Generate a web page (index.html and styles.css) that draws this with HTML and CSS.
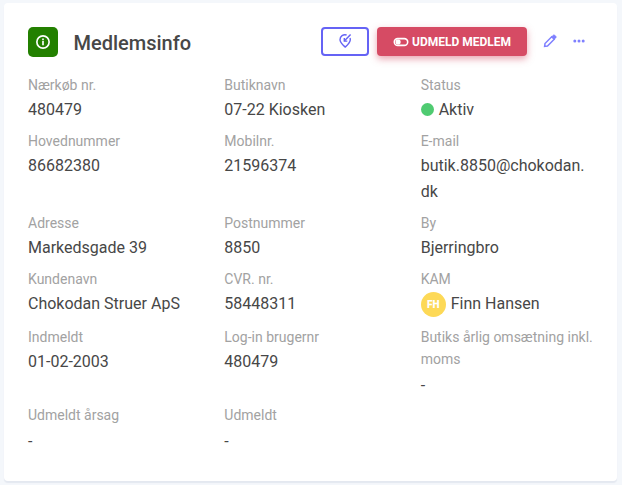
FILE: index.html
```html
<!DOCTYPE html>
<html lang="da">
<head>
<meta charset="utf-8">
<title>Medlemsinfo</title>
<link rel="stylesheet" href="styles.css">
</head>
<body>
<main class="card">
  <header class="card-header">
    <span class="badge">
      <svg width="16" height="16" viewBox="0 0 24 24" fill="none" stroke="#fff" stroke-width="2.5"><circle cx="12" cy="12" r="9.2"/><path d="M12 10.5v6.500M12 6.800v2.400"/></svg>
    </span>
    <h1 class="title">Medlemsinfo</h1>
    <button class="btn btn-outline" aria-label="Placering">
      <svg width="16" height="16" viewBox="0 0 16 16" fill="none" stroke="currentColor" stroke-width="1.400"><path d="M9.600 2C6.300.9 3 3.300 3 6.700c0 2.700 2.100 4.500 5.200 7.400 3.100-2.900 5.100-4.700 5.100-7.400 0-.6-.1-1.100-.3-1.600"/><path d="M7.300 4.900v3.200h3"/><path d="M7.300 8.100L13.600 1.500"/></svg>
    </button>
    <button class="btn btn-danger">
      <svg width="16" height="10" viewBox="0 0 16 10" fill="none" stroke="#fff" stroke-width="1.600"><rect x="1.300" y="1.600" width="13.400" height="6.800" rx="3.400"/><rect x="2.600" y="2.600" width="5" height="4.800" rx="2" fill="#fff" stroke="none"/></svg>
      <span>UDMELD MEDLEM</span>
    </button>
    <button class="icon-btn" aria-label="Rediger">
      <svg width="14" height="14" viewBox="0 0 14 14" fill="none" stroke="currentColor" stroke-width="1.500"><path d="M1.600 12.400l.4-2.900L8.700 2.800l2.500 2.500L4.500 12z"/><path d="M8.600 2.700L10.500.9q.5-.4 1 0L13.100 2.500q.4.500 0 1L11.300 5.400z" fill="currentColor" stroke-width=".5"/></svg>
    </button>
    <button class="icon-btn" aria-label="Mere">
      <svg width="12" height="4" viewBox="0 0 12 4" fill="currentColor"><circle cx="1.800" cy="2" r="1.500"/><circle cx="6" cy="2" r="1.500"/><circle cx="10.200" cy="2" r="1.500"/></svg>
    </button>
  </header>
  <dl class="fields">
    <div><dt>Nærkøb nr.</dt><dd>480479</dd></div>
    <div><dt>Butiknavn</dt><dd>07-22 Kiosken</dd></div>
    <div><dt>Status</dt><dd class="inline"><span class="dot"></span>Aktiv</dd></div>
    <div><dt>Hovednummer</dt><dd>86682380</dd></div>
    <div><dt>Mobilnr.</dt><dd>21596374</dd></div>
    <div><dt>E-mail</dt><dd class="two-line">butik.8850@chokodan.<wbr>dk</dd></div>
    <div><dt>Adresse</dt><dd>Markedsgade 39</dd></div>
    <div><dt>Postnummer</dt><dd>8850</dd></div>
    <div><dt>By</dt><dd>Bjerringbro</dd></div>
    <div><dt>Kundenavn</dt><dd>Chokodan Struer ApS</dd></div>
    <div><dt>CVR. nr.</dt><dd>58448311</dd></div>
    <div><dt>KAM</dt><dd class="inline person"><span class="avatar">FH</span>Finn Hansen</dd></div>
    <div><dt>Indmeldt</dt><dd>01-02-2003</dd></div>
    <div><dt>Log-in brugernr</dt><dd>480479</dd></div>
    <div><dt>Butiks årlig omsætning inkl. moms</dt><dd class="empty">-</dd></div>
    <div><dt>Udmeldt årsag</dt><dd class="empty">-</dd></div>
    <div><dt>Udmeldt</dt><dd class="empty">-</dd></div>
  </dl>
</main>
</body>
</html>
```
FILE: styles.css
```css
* { box-sizing: border-box; }
body {
  margin: 0;
  padding: 3px 5px 4px 4px;
  height: 485px;
  background: #f4f7fb;
  color: #474747;
  font-family: Roboto, "Liberation Sans", sans-serif;
  font-size: 16px;
}
.card {
  height: 478px;
  padding: 24px;
  background: #fff;
  border-radius: 4px;
  box-shadow: 0 2px 1px #e4e8f0;
}
.card-header {
  display: flex;
  align-items: center;
  height: 30px;
  margin-bottom: 17px;
}
.badge {
  display: flex;
  align-items: center;
  justify-content: center;
  width: 30px;
  height: 30px;
  border-radius: 5px;
  background: #238000;
}
.badge svg { margin-left: -1px; }
.title {
  flex: 1;
  margin: 2px 0 0 15.5px;
  font-size: 20px;
  font-weight: 500;
  line-height: 30px;
}
button {
  display: flex;
  align-items: center;
  justify-content: center;
  padding: 0;
  border: 0;
  background: none;
  font-family: inherit;
}
.btn {
  height: 29px;
  margin-bottom: 1px;
  border-radius: 4px;
}
.btn-outline {
  width: 48px;
  padding-bottom: 1px;
  border: 2px solid #6563f5;
  color: #6563f5;
}
.btn-danger {
  width: 150px;
  gap: 3px;
  margin-left: 8px;
  background: #d64b64;
  box-shadow: 0 3px 7px rgba(214, 75, 100, .5);
  color: #fff;
  font-size: 12px;
  font-weight: 700;
}
.icon-btn {
  width: 14px;
  margin: 0 0 2px 16px;
  color: #7f80ff;
}
.icon-btn:last-child { margin: 0 7px 2px 15px; }
.fields {
  display: grid;
  grid-template-columns: repeat(3, minmax(0, 1fr));
  gap: 8px 24px;
  margin: 0;
}
dt {
  color: #a2a2a2;
  font-size: 14px;
  line-height: 22px;
}
dd {
  height: 26px;
  margin: 0;
  padding-top: 1px;
  line-height: 26px;
}
.two-line { height: 52px; }
.empty { padding-top: 3px; }
.inline {
  display: flex;
  align-items: center;
}
.dot {
  width: 13px;
  height: 13px;
  margin: -1px 5px 0 0;
  border-radius: 50%;
  background: #4fcb71;
}
.person { height: 28px; padding-bottom: 1px; }
.avatar {
  width: 25px;
  height: 25px;
  margin: 1px 5px 0 0;
  border-radius: 50%;
  background: #fdd957;
  color: #fff;
  font-size: 10px;
  font-weight: 900;
  line-height: 25px;
  text-align: center;
}
```
